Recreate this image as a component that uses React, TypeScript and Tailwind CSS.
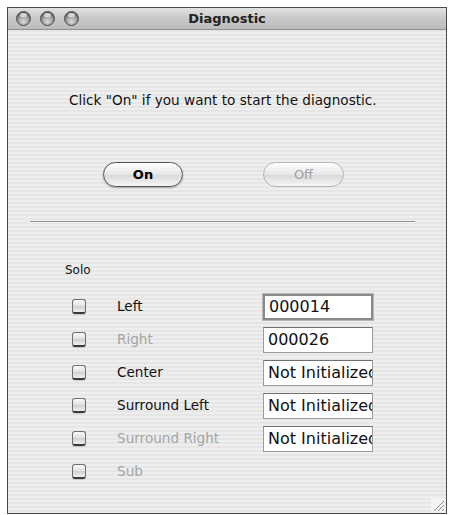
import React from "react";

const font = { fontFamily: '"DejaVu Sans", "Liberation Sans", sans-serif' };

function Light() {
  return (
    <div className="w-[15px] h-[15px] rounded-full border border-[#4e4e4e] bg-[radial-gradient(circle_at_50%_75%,#d8d8d8_0%,#9a9a9a_55%,#6a6a6a_100%)] shadow-[inset_0_1px_2px_rgba(0,0,0,0.5)] relative">
      <div className="absolute left-[3px] top-[1px] w-[7px] h-[4px] rounded-full bg-white/60" />
    </div>
  );
}

function Check() {
  return (
    <div className="w-[14px] h-[15px] rounded-[3px] border border-[#707070] border-b-[2px] border-b-[#3a3a3a] bg-[linear-gradient(to_bottom,#fafafa,#e0e0e0_50%,#d0d0d0_51%,#f0f0f0)] shadow-[0_1px_1px_rgba(0,0,0,0.15)]" />
  );
}

function Field({ value, focus }: { value: string; focus?: boolean }) {
  return (
    <div
      className={
        "w-[110px] h-[26px] bg-white overflow-hidden whitespace-nowrap flex items-center pl-[4px] text-[16px] text-[#111] " +
        (focus
          ? "border-2 border-[#8a8a8a] shadow-[0_0_0_1px_#b5b5b5]"
          : "border border-[#9a9a9a] border-t-[#6f6f6f]")
      }
    >
      {value}
    </div>
  );
}

function Button({ label, disabled }: { label: string; disabled?: boolean }) {
  return (
    <div
      className={
        "h-[25px] rounded-full flex items-center justify-center text-[13px] bg-[linear-gradient(to_bottom,#ffffff,#e6e6e6_50%,#d8d8d8_51%,#f6f6f6)] " +
        (disabled
          ? "w-[81px] border border-[#b4b4b4] text-[#a0a0a0]"
          : "w-[80px] border-[1.5px] border-[#555] text-black font-bold shadow-[0_1px_2px_rgba(0,0,0,0.3)]")
      }
    >
      {label}
    </div>
  );
}

const rows: { label: string; disabled?: boolean; value?: string; focus?: boolean }[] = [
  { label: "Left", value: "000014", focus: true },
  { label: "Right", disabled: true, value: "000026" },
  { label: "Center", value: "Not Initialized" },
  { label: "Surround Left", value: "Not Initialized" },
  { label: "Surround Right", disabled: true, value: "Not Initialized" },
  { label: "Sub", disabled: true },
];

export default function App() {
  return (
    <div className="w-[451px] h-[515px] bg-white pl-[7px] pt-[7px]" style={font}>
      <div className="w-[440px] h-[507px] border border-[#4a4a4a] flex flex-col bg-[repeating-linear-gradient(to_bottom,#eeeeee_0px,#eeeeee_2px,#e6e6e6_2px,#e6e6e6_4px)]">
        <div className="h-[22px] relative flex items-center justify-center border-b border-[#8e8e8e] bg-[linear-gradient(to_bottom,#e2e2e2,#c8c8c8_50%,#bdbdbd)]">
          <div className="absolute left-[8px] top-[3px] flex gap-[9px]">
            <Light />
            <Light />
            <Light />
          </div>
          <span className="text-[13px] font-bold text-[#222]">Diagnostic</span>
        </div>
        <div className="flex-1 flex flex-col relative">
          <div className="mt-[62px] text-[13.6px] leading-[16px] text-[#111] pl-[61px]">
            Click "On" if you want to start the diagnostic.
          </div>
          <div className="mt-[54px] flex pl-[95px] gap-[80px]">
            <Button label="On" />
            <Button label="Off" disabled />
          </div>
          <div className="mt-[34px] ml-[22px] w-[385px] h-[2px] bg-[#8e8e8e] border-b border-[#f8f8f8]" />
          <div className="mt-[39px] pl-[57px] text-[12px] leading-[16px] text-[#111]">Solo</div>
          <div className="mt-[12px] flex flex-col">
            {rows.map((r) => (
              <div key={r.label} className="h-[33px] flex items-center">
                <div className="ml-[64px] w-[14px]">
                  <Check />
                </div>
                <div
                  className={
                    "ml-[31px] w-[146px] text-[13.6px] " +
                    (r.disabled ? "text-[#a4a4a4]" : "text-[#111]")
                  }
                >
                  {r.label}
                </div>
                {r.value && <Field value={r.value} focus={r.focus} />}
              </div>
            ))}
          </div>
          <svg className="absolute right-[1px] bottom-[1px]" width="14" height="14" viewBox="0 0 14 14">
            <rect x="0" y="0" width="14" height="14" fill="#f4f4f4" />
            <line x1="3" y1="13" x2="13" y2="3" stroke="#888" strokeWidth="1" />
            <line x1="7" y1="13" x2="13" y2="7" stroke="#888" strokeWidth="1" />
            <line x1="11" y1="13" x2="13" y2="11" stroke="#888" strokeWidth="1" />
          </svg>
        </div>
      </div>
    </div>
  );
}
